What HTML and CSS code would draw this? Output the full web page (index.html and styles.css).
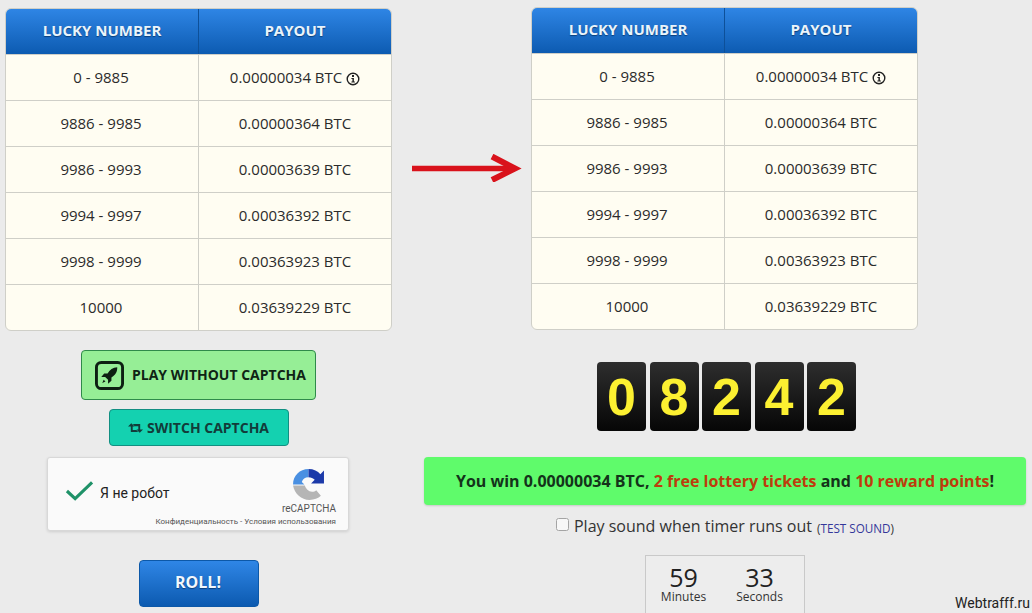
FILE: index.html
```html
<!DOCTYPE html>
<html lang="en">
<head>
<meta charset="utf-8">
<title>Lucky Number</title>
<link rel="stylesheet" href="styles.css">
</head>
<body>
<main class="page">
  <section class="col col-left">
    <div class="table">
      <div class="cell head">LUCKY NUMBER</div><div class="cell head">PAYOUT</div>
      <div class="cell">0 - 9885</div><div class="cell">0.00000034 BTC&nbsp;<svg class="info" viewBox="0 0 14 14"><circle cx="7" cy="7" r="5.8" fill="none" stroke="#222" stroke-width="1.4"/><rect x="6" y="3" width="2" height="2" fill="#222"/><path d="M5.4 6h2.5v3.4h1v1H5.4v-1h1V7h-1z" fill="#222"/></svg></div>
      <div class="cell">9886 - 9985</div><div class="cell">0.00000364 BTC</div>
      <div class="cell">9986 - 9993</div><div class="cell">0.00003639 BTC</div>
      <div class="cell">9994 - 9997</div><div class="cell">0.00036392 BTC</div>
      <div class="cell">9998 - 9999</div><div class="cell">0.00363923 BTC</div>
      <div class="cell">10000</div><div class="cell">0.03639229 BTC</div>
    </div>
    <button class="btn-play">
      <svg class="rocket" viewBox="0 0 30 30"><rect x="1.5" y="1.5" width="27" height="27" rx="5" fill="none" stroke="#0d1f12" stroke-width="3"/><path d="M23 6.5c-4.500.3-7.800 2.500-10 6.500H9.500l-3 3.500h4l3 3v4l3.500-3v-3.500c4-2.200 6.200-5.500 6-10.500z" fill="#0d1f12"/><path d="M9 19.500l1.800 1.800-3.300 1.500z" fill="#0d1f12"/></svg>
      <span>PLAY WITHOUT CAPTCHA</span>
    </button>
    <button class="btn-switch">
      <svg class="swap" viewBox="0 0 16 12"><path d="M3.500 1L7 4.500H5V8h4l1.800 2.200H3V4.500H0zM12.500 11L9 7.500h2V4H7L5.200 1.800H13v5.700h3z" fill="#123c3a"/></svg>
      <span>SWITCH CAPTCHA</span>
    </button>
    <div class="captcha">
      <svg class="check" viewBox="0 0 30 24"><path d="M2 12l8.500 8L28 3" fill="none" stroke="#1f9268" stroke-width="3.200"/></svg>
      <span class="robot">Я не робот</span>
      <div class="brand">
        <svg class="recaptcha" viewBox="0 0 32 32"><path d="M1 16C1 7.500 7.500 1 16 1v8c-3.500 0-5.500 2-6.500 4.500L12 16z" fill="#4a90e2"/><path d="M16 1c5 0 9 2 11.500 5L31 2.500V15H18.500l3.500-3.500C20.500 10 18.500 9 16 9z" fill="#1c3aa9"/><path d="M1 17h11.500c.8 3 3.500 6 7 6 1.500 0 3-.5 4-1.500l4.500 5.500C25.500 29.500 21.500 31 17 31 9 31 2.500 25 1 17z" fill="#b5b5b5"/></svg>
        <span class="re-name">reCAPTCHA</span>
      </div>
      <span class="terms">Конфиденциальность - Условия использования</span>
    </div>
    <button class="btn-roll"><span>ROLL!</span></button>
  </section>

  <section class="col col-right">
    <div class="table">
      <div class="cell head">LUCKY NUMBER</div><div class="cell head">PAYOUT</div>
      <div class="cell">0 - 9885</div><div class="cell">0.00000034 BTC&nbsp;<svg class="info" viewBox="0 0 14 14"><circle cx="7" cy="7" r="5.8" fill="none" stroke="#222" stroke-width="1.4"/><rect x="6" y="3" width="2" height="2" fill="#222"/><path d="M5.400 6h2.500v3.400h1v1H5.400v-1h1V7h-1z" fill="#222"/></svg></div>
      <div class="cell">9886 - 9985</div><div class="cell">0.00000364 BTC</div>
      <div class="cell">9986 - 9993</div><div class="cell">0.00003639 BTC</div>
      <div class="cell">9994 - 9997</div><div class="cell">0.00036392 BTC</div>
      <div class="cell">9998 - 9999</div><div class="cell">0.00363923 BTC</div>
      <div class="cell">10000</div><div class="cell">0.03639229 BTC</div>
    </div>
    <div class="digits">
      <span class="digit">0</span><span class="digit">8</span><span class="digit">2</span><span class="digit">4</span><span class="digit">2</span>
    </div>
    <div class="alert">You win 0.00000034 BTC, <em>2 free lottery tickets</em> and <em>10 reward points</em>!</div>
    <label class="sound"><input type="checkbox" class="sound-box"><span>Play sound when timer runs out</span><small>(<a href="#">TEST SOUND</a>)</small></label>
    <div class="timer">
      <div class="unit"><b>59</b><span>Minutes</span></div>
      <div class="unit"><b>33</b><span>Seconds</span></div>
    </div>
  </section>
</main>

<svg class="arrow" viewBox="0 0 112 28"><path d="M1 14.500H104" fill="none" stroke="#d9121b" stroke-width="5.500"/><path d="M81 2.500L104 14.500 81 26" fill="none" stroke="#d9121b" stroke-width="6"/></svg>
<div class="mark">Webtrafff.ru</div>
</body>
</html>
```
FILE: styles.css
```css
* { box-sizing: border-box; }
html, body { margin: 0; height: 613px; overflow: hidden; }
body { background: #ebebeb; font-family: "Open Sans", sans-serif; color: #222; position: relative; }
.page { display: flex; align-items: flex-start; gap: 32px; padding-left: 5px; }
.col { display: flex; flex-direction: column; align-items: center; }
.col-left { width: 387px; padding-top: 8px; }
.col-right { width: 602px; padding-top: 7px; }

.table { width: 387px; height: 323px; display: grid; grid-template-columns: 193px 194px; grid-auto-rows: 46px; background: #fffdf2; border: 1px solid #cfcfc8; border-radius: 6px; overflow: hidden; }
.col-right .table { margin-right: 1px; }
.cell { display: flex; align-items: center; justify-content: center; font-size: 15px; color: #2b2b2b; border-top: 1px solid #cfcfc8; margin-top: -1px; height: 47px; padding: 0 2px 2px 0; }
.cell:nth-child(odd) { border-right: 1px solid #cfcfc8; }
.head { margin: -1px 0 0; border: 0; height: 47px; padding: 0 2px 4px 0; background: linear-gradient(#2f86e6, #0c5ab0); color: #eaf4fb; font-weight: 700; text-shadow: 0 1px 1px #0a3f7c; }
.head:nth-child(odd) { border-right: 1px solid #0d5099; padding-right: 0; }
.info { width: 14px; height: 14px; margin-top: 3px; }

button { font-family: inherit; cursor: pointer; }
.btn-play { margin-top: 19px; width: 235px; height: 50px; display: flex; align-items: center; gap: 8px; padding: 0 0 1px 13px; background: #96ee96; border: 1px solid #2f8a4a; border-radius: 4px; font-size: 14px; font-weight: 700; color: #0f2415; }
.rocket { width: 29px; height: 29px; flex: none; margin-top: 1px; }
.btn-switch { margin-top: 9px; width: 180px; height: 37px; display: flex; align-items: center; justify-content: center; gap: 4px; padding: 0; background: #14d1b0; border: 1px solid #128f82; border-radius: 4px; font-size: 14px; font-weight: 700; color: #123c3a; }
.swap { width: 15px; height: 12px; flex: none; margin-top: 1px; }

.captcha { margin: 11px 1px 0 0; width: 302px; height: 74px; position: relative; background: #fafafa; border: 1px solid #d8d8d8; border-radius: 3px; box-shadow: 0 1px 3px rgba(0,0,0,.12); display: flex; align-items: flex-start; padding: 21px 12px 0 17px; font-family: Roboto, sans-serif; }
.check { width: 29px; height: 24px; flex: none; }
.robot { margin: 6px 0 0 6px; font-size: 14px; color: #222; }
.brand { margin-left: auto; margin-top: -11px; display: flex; flex-direction: column; align-items: center; }
.recaptcha { width: 33px; height: 33px; }
.re-name { font-size: 10px; color: #555; margin-top: 2px; }
.terms { position: absolute; right: 12px; bottom: 4px; font-size: 8px; color: #555; white-space: nowrap; }

.btn-roll { margin-top: 29px; width: 120px; height: 47px; padding: 0 1px 3px 0; background: linear-gradient(#2f86e6, #0c5ab0); border: 1px solid #0c58a8; border-radius: 4px; color: #f2f8fd; font-size: 16px; font-weight: 700; text-shadow: 0 1px 1px #0a3f7c; }

.digits { margin: 32px 0 0 3px; display: flex; gap: 3.500px; }
.digit { width: 49px; height: 69px; display: flex; align-items: center; justify-content: center; background: linear-gradient(#2e2e2e, #060606); border-radius: 4px; color: #fcf031; font-family: "Liberation Sans", sans-serif; font-weight: 700; font-size: 52px; }

.alert { margin-top: 26px; width: 100%; height: 48px; display: flex; align-items: center; justify-content: center; white-space: pre-wrap; background: #5ffb6b; border-radius: 4px; font-size: 16px; font-weight: 700; color: #14331a; box-shadow: 0 1px 2px rgba(0,0,0,.15); }
.alert em { font-style: normal; color: #bd3c0c; }

.sound { margin-top: 10px; display: flex; align-items: center; height: 22px; font-size: 16px; color: #333; white-space: pre; }
.sound-box { margin: 0 5px 3px 0; width: 13px; height: 13px; opacity: .6; }
.sound small { font-size: 11.700px; margin: 3px 0 0 5px; color: #333; }
.sound a { color: #33379a; text-decoration: none; }

.timer { margin-top: 18px; width: 160px; height: 70px; display: flex; justify-content: center; gap: 23px; padding: 8px 7px 0 0; background: #ededed; border: 1px solid #c9c9c9; }
.unit { width: 53px; display: flex; flex-direction: column; align-items: center; font-size: 12px; color: #333; line-height: 13px; }
.unit b { font-weight: 400; font-size: 25px; line-height: 26px; color: #222; }

.arrow { position: absolute; left: 411px; top: 154px; width: 112px; height: 28px; }
.mark { position: absolute; right: 2px; top: 595px; font-family: Roboto, sans-serif; font-size: 14px; color: #222; }
```
